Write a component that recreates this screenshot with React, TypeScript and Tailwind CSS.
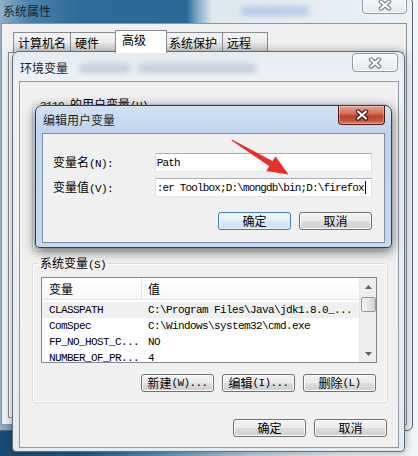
import React from "react";

const MONO = "font-['Liberation_Mono','Noto_Sans_CJK_SC',monospace] text-[11px] tracking-[-0.6px]";

function A({ children }: { children: React.ReactNode }) {
  return <span className={MONO}>{children}</span>;
}

function Button({ children, focused = false }: { children: React.ReactNode; focused?: boolean }) {
  return (
    <div
      className={`flex h-[18px] w-[73px] items-center justify-center rounded-[3px] border leading-none ${
        focused
          ? "border-[#3c7fb1] bg-[linear-gradient(#f1f8fd,#e3f0fa_50%,#d5e9f7_50%,#c9e2f4)] shadow-[inset_0_0_0_1px_#e8f4fc]"
          : "border-[#707070] bg-[linear-gradient(#f2f2f2,#ebebeb_50%,#dddddd_50%,#cfcfcf)] shadow-[inset_0_0_0_1px_#fbfbfb]"
      }`}
    >
      {children}
    </div>
  );
}

function XIcon({ outline }: { outline: string }) {
  return (
    <svg width="14" height="12" viewBox="0 0 14 12">
      <path d="M3 2.5 L11 9.5 M11 2.5 L3 9.5" stroke={outline} strokeWidth="4.4" strokeLinecap="round" />
      <path d="M3 2.5 L11 9.5 M11 2.5 L3 9.5" stroke="#ffffff" strokeWidth="2.2" strokeLinecap="round" />
    </svg>
  );
}

function InactiveClose({ className }: { className: string }) {
  return (
    <div
      className={`absolute flex items-center justify-center rounded-[4px] border border-[#8c99a6] bg-[linear-gradient(#fafbfc,#eef2f5_50%,#e4eaef)] shadow-[inset_0_0_0_1px_#ffffff] ${className}`}
    >
      <XIcon outline="#7a7f86" />
    </div>
  );
}

function GroupBox({
  label,
  className,
  children,
}: {
  label: React.ReactNode;
  className: string;
  children?: React.ReactNode;
}) {
  return (
    <div className={`relative rounded-[3px] border border-[#d5dfe5] shadow-[inset_0_0_0_1px_#ffffff] ${className}`}>
      <span className="absolute left-[6px] top-[-8px] bg-[#f0f0f0] px-[1px] leading-[14px]">{label}</span>
      {children}
    </div>
  );
}

const tabs = [
  { label: "计算机名", w: "w-[58px]" },
  { label: "硬件", w: "w-[47px]" },
  { label: "高级", w: "w-[52px]", sel: true },
  { label: "系统保护", w: "w-[59px]" },
  { label: "远程", w: "w-[46px]" },
];

function SystemProperties() {
  return (
    <div className="absolute left-[-6px] top-[-3px] flex h-[434px] w-[419px] flex-col rounded-[6px] border border-[#56626e] bg-[linear-gradient(90deg,#9cb8cc_0%,#4a82ad_8%,#2f6b98_20%,#2c6896_46%,#8fb2cc_49%,#dde8ef_52%,#edf2f5_100%)] pb-[5px] pl-[6px] pr-[5px]">
      <div className="pointer-events-none absolute left-[246px] top-[9px] h-[8px] w-[68px] rounded-full bg-[#7d9ddb] opacity-50 blur-[3px]" />
      <div className="flex h-[25px] items-center pl-[2px] pt-[1px] text-[#1e1e1e]">系统属性</div>
      <InactiveClose className="right-[5px] top-[-3px] h-[19px] w-[45px]" />
      <div className="flex flex-1 flex-col border border-[#8a97a3] bg-[#f0f0f0]">
        <div className="ml-[11px] mt-[6px] flex h-[23px] items-end">
          {tabs.map((t, i) =>
            t.sel ? (
              <div
                key={t.label}
                className={`relative z-10 -ml-[2px] -mr-[2px] flex h-[23px] ${t.w} items-start border border-b-0 border-[#898c95] bg-white pl-[6px] pt-[2px]`}
              >
                {t.label}
              </div>
            ) : (
              <div
                key={t.label}
                className={`${i === 0 ? "" : "-ml-px"} flex h-[21px] ${t.w} items-start border border-b-0 border-[#898c95] bg-[linear-gradient(#f3f3f3,#ebebeb_50%,#e2e2e2_50%,#dcdcdc)] pl-[4px] pt-[3px]`}
              >
                {t.label}
              </div>
            )
          )}
        </div>
        <div className="-mt-px mb-[6px] ml-[6px] mr-[3px] flex-1 border border-[#898c95] bg-white" />
      </div>
    </div>
  );
}

const rows = [
  ["CLASSPATH", "C:\\Program Files\\Java\\jdk1.8.0_..."],
  ["ComSpec", "C:\\Windows\\system32\\cmd.exe"],
  ["FP_NO_HOST_C...", "NO"],
  ["NUMBER_OF_PR...", "4"],
];

function Scrollbar() {
  return (
    <div className="flex w-[17px] flex-col items-center border-l border-[#e6e6e6] bg-[#ededed]">
      <div className="flex h-[17px] items-center justify-center">
        <svg width="7" height="4" viewBox="0 0 7 4">
          <path d="M0 4 L3.5 0 L7 4 Z" fill="#606060" />
        </svg>
      </div>
      <div className="mt-[2px] h-[15px] w-[15px] rounded-[2px] border border-[#979797] bg-[linear-gradient(90deg,#f4f4f4,#e4e4e4_50%,#d2d2d2)]" />
      <div className="flex-1" />
      <div className="flex h-[17px] items-center justify-center">
        <svg width="7" height="4" viewBox="0 0 7 4">
          <path d="M0 0 L3.5 4 L7 0 Z" fill="#606060" />
        </svg>
      </div>
    </div>
  );
}

function EnvWindow() {
  return (
    <div className="absolute left-[12px] top-[51px] flex h-[401px] w-[393px] flex-col rounded-b-[4px] rounded-t-[7px] border border-[#5f6d7a] bg-[linear-gradient(#e4ecf2,#eef2f6_30px,#e3ebf1)] pb-[3px] pl-[6px] pr-[5px] shadow-[0_0_8px_rgba(0,0,0,0.35)]">
      <div className="pointer-events-none absolute left-[66px] top-[12px] h-[9px] w-[52px] rounded-full bg-[#9eaac2] opacity-50 blur-[3px]" />
      <div className="pointer-events-none absolute left-[124px] top-[12px] h-[9px] w-[120px] rounded-full bg-[#9eaac2] opacity-50 blur-[3px]" />
      <div className="flex h-[29px] items-center pl-[1px] pt-[2px] text-[#1e1e1e]">环境变量</div>
      <InactiveClose className="right-[6px] top-[1px] h-[19px] w-[46px]" />
      <div className="flex flex-1 flex-col border border-[#8e9aa6] bg-[#f0f0f0]">
        <GroupBox
          label={
            <>
              <A>3110 </A>的用户变量<A>(U)</A>
            </>
          }
          className="ml-[12px] mt-[22px] h-[148px] w-[356px]"
        />
        <GroupBox
          label={
            <>
              系统变量<A>(S)</A>
            </>
          }
          className="ml-[12px] mt-[11px] h-[140px] w-[356px]"
        >
          <div className="ml-[8px] mt-[13px] flex h-[86px] w-[336px] border border-[#828790] bg-white">
            <div className="flex-1 overflow-hidden">
              <div className="flex h-[22px] items-center border-b border-[#e5e5e5] bg-[linear-gradient(#ffffff,#f6f7f8)]">
                <div className="flex h-full w-[100px] items-center border-r border-[#e5e5e5] pl-[7px]">变量</div>
                <div className="pl-[6px]">值</div>
              </div>
              <div className="mt-[2px]">
                {rows.map(([k, v], i) => (
                  <div
                    key={k}
                    className={`flex h-[16px] items-center whitespace-nowrap ${MONO} ${i === 0 ? "bg-[#efefef]" : ""}`}
                  >
                    <div className="w-[100px] pl-[7px]">{k}</div>
                    <div className="pl-[6px]">{v}</div>
                  </div>
                ))}
              </div>
            </div>
            <Scrollbar />
          </div>
          <div className="mt-[11px] flex justify-end gap-[8px] pr-[11px]">
            <Button>
              新建<A>(W)...</A>
            </Button>
            <Button>
              编辑<A>(I)...</A>
            </Button>
            <Button>
              删除<A>(L)</A>
            </Button>
          </div>
        </GroupBox>
        <div className="mt-[16px] flex justify-end gap-[8px] pr-[11px]">
          <Button>确定</Button>
          <Button>取消</Button>
        </div>
      </div>
    </div>
  );
}

function Field({ label, children }: { label: React.ReactNode; children: React.ReactNode }) {
  return (
    <div className="flex h-[19px] items-center">
      <div className="w-[102px]">{label}</div>
      <div className="flex h-[19px] w-[218px] items-center overflow-hidden whitespace-nowrap border border-[#abadb3] border-b-[#e3e9ef] border-l-[#e2e3ea] border-r-[#dbdfe6] bg-white pl-[1px] font-['Liberation_Mono',monospace] text-[11px] tracking-[-0.85px]">
        {children}
      </div>
    </div>
  );
}

function EditDialog() {
  return (
    <div className="absolute left-[35px] top-[105px] flex h-[143px] w-[357px] flex-col rounded-b-[4px] rounded-t-[7px] border border-[#34404c] bg-[linear-gradient(#d2e2f3,#bed4ec_27px,#c4d9ee)] px-[6px] pb-[4px] shadow-[0_3px_12px_rgba(0,0,0,0.6)]">
      <div className="flex h-[27px] items-center pl-[1px] text-[#1e1e1e]">编辑用户变量</div>
      <div className="absolute right-[6px] top-0 flex h-[19px] w-[47px] items-center justify-center rounded-b-[4px] border border-t-0 border-[#4f1a12] bg-[linear-gradient(#e6a595,#d7705c_40%,#c2412a_55%,#c8513a_80%,#dc8570)] shadow-[inset_0_0_0_1px_rgba(255,255,255,0.3)]">
        <XIcon outline="#3b1a15" />
      </div>
      <div className="flex flex-1 flex-col border border-[#7b90a7] bg-[#f0f0f0] pl-[10px] pr-[12px] pt-[19px]">
        <Field
          label={
            <>
              变量名<A>(N):</A>
            </>
          }
        >
          Path
        </Field>
        <div className="mt-[6px]">
          <Field
            label={
              <>
                变量值<A>(V):</A>
              </>
            }
          >
            {":er Toolbox;D:\\mongdb\\bin;D:\\firefox"}
            <span className="ml-px inline-block h-[13px] w-px shrink-0 bg-black" />
          </Field>
        </div>
        <div className="mt-[15px] flex justify-end gap-[8px]">
          <Button focused>确定</Button>
          <Button>取消</Button>
        </div>
      </div>
    </div>
  );
}

function Arrow() {
  return (
    <svg className="pointer-events-none absolute left-0 top-0" width="418" height="456" viewBox="0 0 418 456">
      <polygon
        points="232,139.4 272.5,161 275.6,156.4 288.5,174.5 266.2,171 269.3,166.2 231.6,140.4"
        fill="#e7302a"
      />
    </svg>
  );
}

export default function App() {
  return (
    <div className="relative h-[456px] w-[418px] overflow-hidden bg-[linear-gradient(90deg,#184b75_0%,#1f5b88_20%,#5f98c4_40%,#b9d3e6_60%,#e9f0f4_80%,#f3f6f8_100%)] font-['Noto_Sans_CJK_SC',sans-serif] text-[12px] leading-[14px] text-black">
      <SystemProperties />
      <EnvWindow />
      <EditDialog />
      <Arrow />
    </div>
  );
}
